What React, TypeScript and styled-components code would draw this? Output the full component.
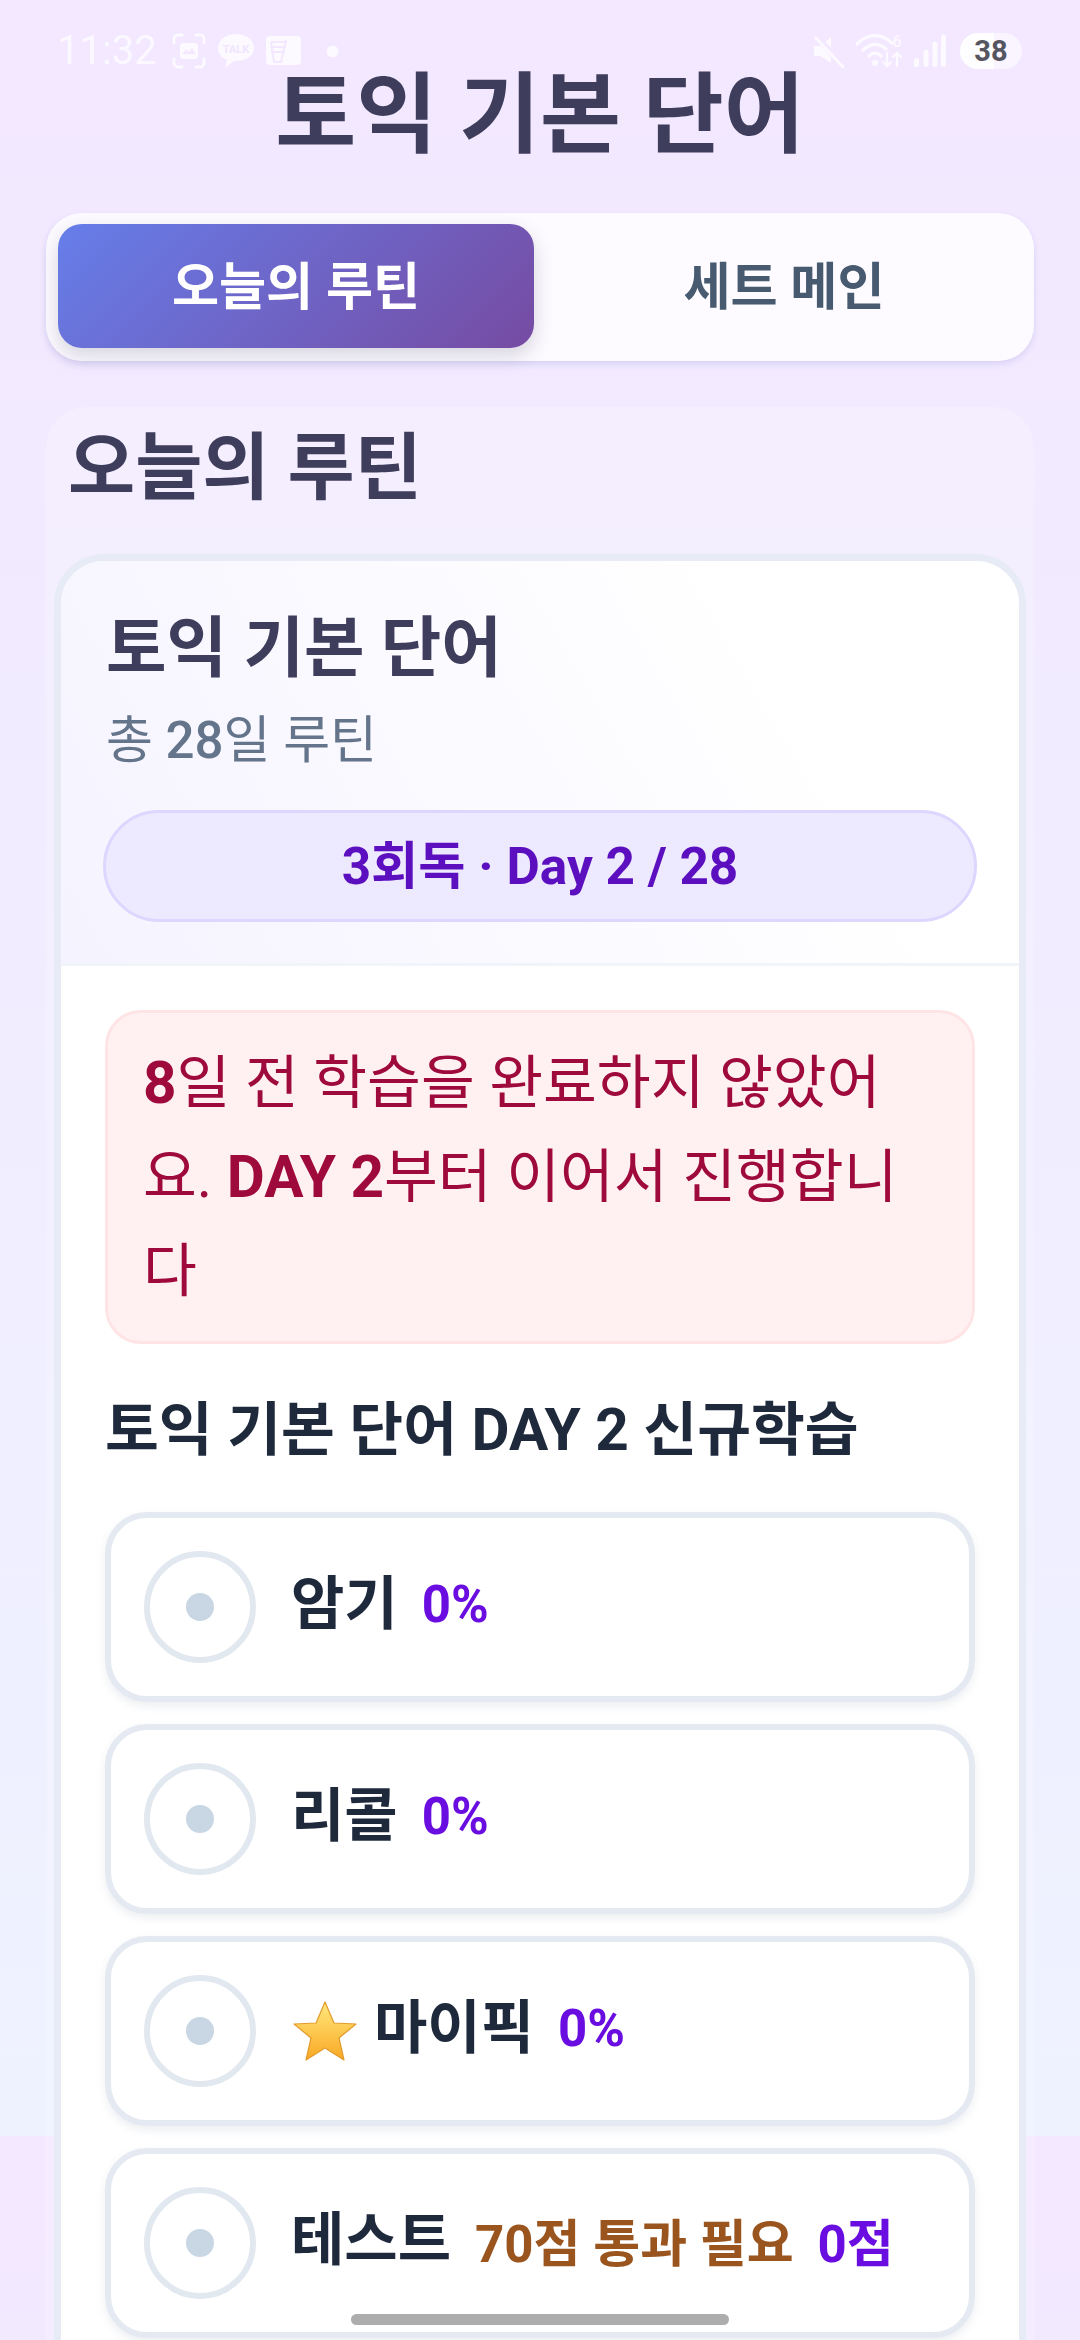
import React from "react";
import styled, { createGlobalStyle } from "styled-components";

const Global = createGlobalStyle`
  html {
    background: linear-gradient(180deg, #f3e8ff 0%, #eef2ff 100%) 0 0 / 100% 2136px repeat-y;
  }
  body {
    margin: 0;
    font-family: Roboto, "Noto Sans CJK KR", sans-serif;
  }
`;

const Page = styled.div`
  position: relative;
  width: 1080px;
  height: 2340px;
  overflow: hidden;
  box-sizing: border-box;
  padding: 60px 46px 0;
`;

const StatusBar = styled.div`
  position: absolute;
  top: 32px;
  left: 57px;
  right: 58px;
  height: 38px;
  display: flex;
  align-items: center;
  justify-content: space-between;
  color: rgba(255, 255, 255, 0.72);
`;

const StatusGroup = styled.div`
  display: flex;
  align-items: center;
`;

const Time = styled.span`
  font-size: 40px;
  line-height: 38px;
  width: 115px;
`;

const StatusIcon = styled.svg<{ $gap?: number }>`
  display: block;
  flex: none;
  margin-right: ${(p) => p.$gap ?? 0}px;
`;

const Battery = styled.div`
  width: 62px;
  height: 36px;
  margin-left: 14px;
  border-radius: 18px;
  background: linear-gradient(90deg, rgba(255, 255, 255, 0.95) 55%, rgba(255, 255, 255, 0.55) 55%);
  color: #55555f;
  font-size: 29px;
  font-weight: 700;
  line-height: 36px;
  text-align: center;
`;

const Title = styled.h1`
  margin: 0;
  font-size: 88px;
  line-height: 110px;
  font-weight: 700;
  color: #3f3d5c;
  text-align: center;
`;

const Tabs = styled.div`
  display: grid;
  grid-template-columns: 476px 1fr;
  margin-top: 43px;
  height: 148px;
  box-sizing: border-box;
  padding: 11px 0 11px 12px;
  border-radius: 36px;
  background: rgba(255, 255, 255, 0.8);
  box-shadow: 0 3px 6px rgba(102, 100, 200, 0.18);
`;

const Tab = styled.div<{ $active?: boolean }>`
  display: flex;
  align-items: center;
  justify-content: center;
  height: 124px;
  box-sizing: border-box;
  padding-bottom: 6px;
  border-radius: 24px;
  font-size: 51.2px;
  font-weight: 700;
  color: ${(p) => (p.$active ? "#ffffff" : "#475a70")};
  background: ${(p) => (p.$active ? "linear-gradient(135deg, #667eea 0%, #764ba2 100%)" : "transparent")};
  box-shadow: ${(p) => (p.$active ? "0 8px 20px rgba(60, 60, 90, 0.2)" : "none")};
`;

const Section = styled.section`
  margin-top: 46px;
  padding: 22px 8px 0;
  border-radius: 40px 40px 0 0;
  background: rgba(255, 255, 255, 0.2);
`;

const SectionTitle = styled.h2`
  margin: 0 0 0 14px;
  font-size: 73px;
  line-height: 78px;
  font-weight: 700;
  color: #3f3d5c;
`;

const Card = styled.div`
  margin-top: 47px;
  border: 7px solid #e6ebf5;
  border-radius: 50px;
  background: #ffffff;
  overflow: hidden;
`;

const CardHeader = styled.div`
  padding: 49px 42px 41px;
  background: linear-gradient(60deg, #f5f3ff 0%, #ffffff 75%);
  border-bottom: 3px solid #f1f5f9;
`;

const CardTitle = styled.h3`
  margin: 0;
  padding-left: 3px;
  font-size: 65.8px;
  line-height: 78px;
  font-weight: 700;
  color: #3f3d5c;
`;

const CardSub = styled.p`
  margin: 23px 0 0;
  padding-left: 3px;
  font-size: 51px;
  line-height: 60px;
  font-weight: 400;
  color: #64748b;

  strong {
    font-weight: 500;
  }
`;

const Pill = styled.div`
  margin-top: 39px;
  height: 112px;
  box-sizing: border-box;
  padding-bottom: 9px;
  border: 3px solid #ddd6fe;
  border-radius: 56px;
  background: #ede9fe;
  color: #5b0fbe;
  font-size: 51.3px;
  font-weight: 700;
  display: flex;
  align-items: center;
  justify-content: center;
`;

const CardBody = styled.div`
  padding: 44px 44px 60px;
`;

const Alert = styled.div`
  box-sizing: border-box;
  height: 334px;
  padding: 23px 44px 20px 35px;
  border: 3px solid #ffe4e6;
  border-radius: 36px;
  background: #fff1f2;
  color: #9f0a3c;
  font-size: 58.5px;
  line-height: 94px;

  strong {
    font-weight: 700;
  }
`;

const DayTitle = styled.h4`
  margin: 46px 0 0;
  font-size: 58.5px;
  line-height: 80px;
  font-weight: 700;
  color: #1e293b;
`;

const ItemList = styled.div`
  margin-top: 42px;
  display: flex;
  flex-direction: column;
  gap: 22px;
`;

const Item = styled.div`
  display: flex;
  align-items: center;
  gap: 35px;
  box-sizing: border-box;
  height: 190px;
  padding: 0 33px;
  border: 6px solid #e5eaf2;
  border-radius: 42px;
  background: #ffffff;
  box-shadow: 0 4px 8px rgba(100, 116, 139, 0.12);
`;

const Circle = styled.div`
  flex: none;
  width: 112px;
  height: 112px;
  box-sizing: border-box;
  border: 6px solid #e2e8f0;
  border-radius: 50%;
  display: flex;
  align-items: center;
  justify-content: center;

  &::after {
    content: "";
    width: 28px;
    height: 28px;
    border-radius: 50%;
    background: #c9d6e3;
  }
`;

const ItemText = styled.div`
  display: flex;
  align-items: center;
  margin-top: -6px;
  white-space: nowrap;
`;

const Label = styled.span`
  font-size: 58px;
  line-height: 70px;
  font-weight: 700;
  color: #1e293b;
`;

const Star = styled.svg`
  flex: none;
  margin: 6px 17px 0 2px;
`;

const Meta = styled.span<{ $tone?: "purple" | "brown" }>`
  margin-left: 24px;
  font-size: 51px;
  font-weight: 700;
  color: ${(p) => (p.$tone === "brown" ? "#9a551f" : "#6a0de0")};
`;

const HomeBar = styled.div`
  position: absolute;
  left: 351px;
  bottom: 15px;
  width: 378px;
  height: 11px;
  border-radius: 6px;
  background: #adadad;
`;

const tasks = [
  { name: "암기", value: "0%" },
  { name: "리콜", value: "0%" },
  { name: "마이픽", value: "0%", star: true },
  { name: "테스트", note: "70점 통과 필요", value: "0점" },
];

export default function App() {
  return (
    <>
      <Global />
      <Page>
        <StatusBar>
          <StatusGroup>
            <Time>11:32</Time>
            <StatusIcon $gap={11} width="34" height="36" viewBox="0 0 34 36" fill="none">
              <path d="M2 10V6a4 4 0 0 1 4-4h4M24 2h4a4 4 0 0 1 4 4v4M32 26v4a4 4 0 0 1-4 4h-4M10 34H6a4 4 0 0 1-4-4v-4" stroke="currentColor" strokeWidth="3" strokeLinecap="round" />
              <rect x="8" y="10" width="18" height="16" rx="3" fill="currentColor" />
              <path d="M10 21l4-4 3 2 3-4 4 6z" fill="#f3e8ff" />
            </StatusIcon>
            <StatusIcon $gap={11} width="38" height="36" viewBox="0 0 38 36">
              <path d="M19 1C9 1 1 7 1 15c0 6 4 10 9 12l-2 8 9-7h2c10 0 18-5 18-13S29 1 19 1z" fill="currentColor" />
              <text x="19" y="20" textAnchor="middle" fontSize="11" fontWeight="700" fontFamily="Roboto, sans-serif" fill="#f0e6ff">TALK</text>
            </StatusIcon>
            <StatusIcon $gap={25} width="35" height="30" viewBox="0 0 35 30">
              <rect width="35" height="29" rx="4" fill="currentColor" />
              <path d="M5 6h16M5 11h15M5 16h14M20 4l-5 22H8L5 6" stroke="#f3e8ff" strokeWidth="2" fill="none" />
            </StatusIcon>
            <StatusIcon width="13" height="13" viewBox="0 0 13 13">
              <circle cx="6.500" cy="6.500" r="6" fill="currentColor" />
            </StatusIcon>
          </StatusGroup>
          <StatusGroup>
            <StatusIcon $gap={10} width="33" height="34" viewBox="0 0 33 34">
              <path d="M1 12h6l11-9v26L7 22H1z" fill="currentColor" />
              <path d="M4 3l26 29" stroke="#f3e8ff" strokeWidth="6" />
              <path d="M3 4l27 29" stroke="currentColor" strokeWidth="3" strokeLinecap="round" />
            </StatusIcon>
            <StatusIcon $gap={10} width="48" height="36" viewBox="0 0 48 36" fill="none">
              <path d="M1 11C12 0 26 0 36 10" stroke="currentColor" strokeWidth="3.400" strokeLinecap="round" />
              <path d="M7 17c8-7 16-7 23-1M13 23c4-4 8-4 12 0" stroke="currentColor" strokeWidth="3.400" strokeLinecap="round" />
              <circle cx="19" cy="30" r="3" fill="currentColor" />
              <path d="M31 20v13m-4-4l4 4 4-4M41 33V20m-4 4l4-4 4 4" stroke="currentColor" strokeWidth="2.400" strokeLinecap="round" />
              <text x="41" y="14" textAnchor="middle" fontSize="16" fontWeight="500" fontFamily="Roboto, sans-serif" fill="currentColor">6</text>
            </StatusIcon>
            <StatusIcon width="32" height="34" viewBox="0 0 32 34">
              <path d="M2.500 33a2.500 2.500 0 0 1-2.500-2.500v-4a2.500 2.500 0 0 1 5 0v4a2.500 2.500 0 0 1-2.500 2.500zM12 33a2.500 2.500 0 0 1-2.500-2.500V18a2.500 2.500 0 0 1 5 0v12.500A2.500 2.500 0 0 1 12 33zM21 33a2.500 2.500 0 0 1-2.500-2.500V10a2.500 2.500 0 0 1 5 0v20.500A2.500 2.500 0 0 1 21 33zM29.500 33a2.500 2.500 0 0 1-2.500-2.500V3a2.500 2.500 0 0 1 5 0v27.500a2.500 2.500 0 0 1-2.500 2.500z" fill="currentColor" />
            </StatusIcon>
            <Battery>38</Battery>
          </StatusGroup>
        </StatusBar>

        <Title>토익 기본 단어</Title>

        <Tabs>
          <Tab $active>오늘의 루틴</Tab>
          <Tab>세트 메인</Tab>
        </Tabs>

        <Section>
          <SectionTitle>오늘의 루틴</SectionTitle>
          <Card>
            <CardHeader>
              <CardTitle>토익 기본 단어</CardTitle>
              <CardSub>
                총 <strong>28</strong>일 루틴
              </CardSub>
              <Pill>3회독 · Day 2 / 28</Pill>
            </CardHeader>
            <CardBody>
              <Alert>
                <strong>8</strong>일 전 학습을 완료하지 않았어요. <strong>DAY 2</strong>부터 이어서 진행합니다
              </Alert>
              <DayTitle>토익 기본 단어 DAY 2 신규학습</DayTitle>
              <ItemList>
                {tasks.map((task) => (
                  <Item key={task.name}>
                    <Circle />
                    <ItemText>
                      {task.star && (
                        <Star width="64" height="60" viewBox="0 0 64 60">
                          <defs>
                            <linearGradient id="starFill" x1="0" y1="0" x2="0" y2="1">
                              <stop offset="0" stopColor="#ffe97c" />
                              <stop offset="1" stopColor="#f9a825" />
                            </linearGradient>
                          </defs>
                          <path d="M32 1L41 22L63 23L46 37L51 59L32 47L13 59L18 37L1 23L23 22Z" fill="url(#starFill)" stroke="#e39a2c" strokeWidth="1.200" strokeLinejoin="round" />
                        </Star>
                      )}
                      <Label>{task.name}</Label>
                      {task.note && <Meta $tone="brown">{task.note}</Meta>}
                      <Meta>{task.value}</Meta>
                    </ItemText>
                  </Item>
                ))}
              </ItemList>
            </CardBody>
          </Card>
        </Section>
        <HomeBar />
      </Page>
    </>
  );
}
